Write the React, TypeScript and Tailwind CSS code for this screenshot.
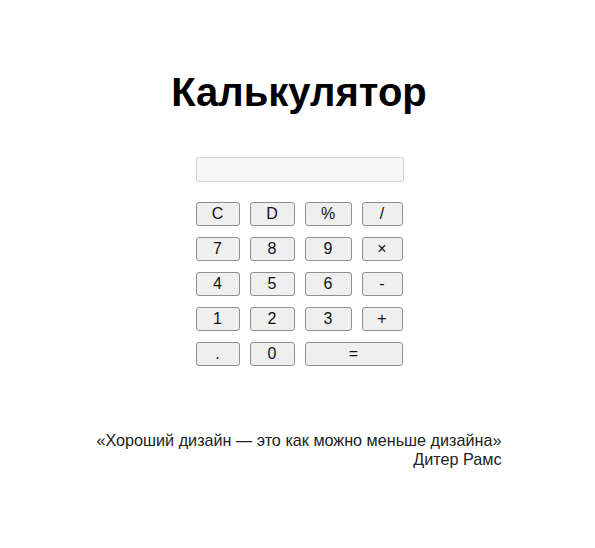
import React from 'react';

const keys: { label: string; wide?: boolean }[] = [
  { label: 'C' }, { label: 'D' }, { label: '%' }, { label: '/' },
  { label: '7' }, { label: '8' }, { label: '9' }, { label: '×' },
  { label: '4' }, { label: '5' }, { label: '6' }, { label: '-' },
  { label: '1' }, { label: '2' }, { label: '3' }, { label: '+' },
  { label: '.' }, { label: '0' }, { label: '=', wide: true },
];

export default function App() {
  const [value, setValue] = React.useState('');

  return (
    <div className="min-h-[548px] bg-white pl-[3px] font-['Liberation_Sans',Arial,sans-serif] text-black">
      <h1 className="pt-[68px] text-center text-[40px] font-bold leading-[48px]">Калькулятор</h1>

      <div className="mx-auto mt-[41px] w-[207px]">
        <input
          value={value}
          onChange={(e) => setValue(e.target.value)}
          className="block h-[25px] w-[208px] rounded-[2px] border border-[#d4d4d4] bg-[#f6f6f6] px-1 text-[15px] outline-none"
        />
        <div className="mt-[20px] grid grid-cols-[44px_45px_47px_41px] gap-x-[10px] gap-y-[11px]">
          {keys.map((k) => (
            <button
              key={k.label}
              onClick={() => setValue((v) => (k.label === 'C' ? '' : v + k.label))}
              className={`h-[24px] rounded-[3px] border border-[#8f8f8f] bg-[#efefef] text-[16px] leading-none text-[#111] hover:bg-[#e5e5e5] ${
                k.wide ? 'col-span-2' : ''
              }`}
            >
              {k.label}
            </button>
          ))}
        </div>
      </div>

      <div className="mt-[65px] flex justify-center">
        <blockquote className="text-right text-[16.2px] leading-[19px] text-[#222]">
          <p>«Хороший дизайн — это как можно меньше дизайна»</p>
          <p>Дитер Рамс</p>
        </blockquote>
      </div>
    </div>
  );
}
